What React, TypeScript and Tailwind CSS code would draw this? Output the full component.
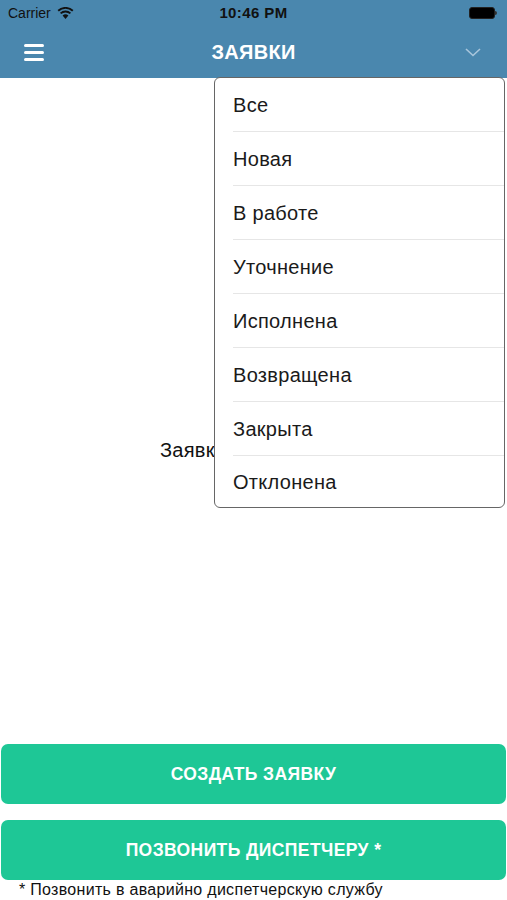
const statuses = [
  "Все",
  "Новая",
  "В работе",
  "Уточнение",
  "Исполнена",
  "Возвращена",
  "Закрыта",
  "Отклонена",
];

function Wifi() {
  return (
    <svg width="17" height="12" viewBox="0 0 17 12">
      <path d="M8.5 12 L5.6 8.6 A4.4 4.4 0 0 1 11.4 8.6 Z" fill="#111" />
      <path
        d="M3.6 6.4 A7.2 7.2 0 0 1 13.4 6.4"
        stroke="#111"
        strokeWidth="1.9"
        fill="none"
      />
      <path
        d="M1.2 3.8 A10.6 10.6 0 0 1 15.8 3.8"
        stroke="#111"
        strokeWidth="1.9"
        fill="none"
      />
    </svg>
  );
}

function Battery() {
  return (
    <div className="flex items-center">
      <div className="w-[26px] h-[12px] rounded-[3px] bg-black border border-[#222]" />
      <div className="w-[2px] h-[4px] bg-[#333] rounded-r-sm" />
    </div>
  );
}

export default function App() {
  return (
    <div
      className="relative h-[900px] w-full flex flex-col bg-white overflow-hidden"
      style={{ fontFamily: '"Liberation Sans", Arial, sans-serif' }}
    >
      {/* шапка */}
      <div className="bg-[#4a87ae] h-[78px] flex flex-col">
        <div className="h-[26px] px-2 flex items-center justify-between text-[#111] text-[14px]">
          <div className="flex items-center gap-[6px] w-[100px]">
            <span>Carrier</span>
            <Wifi />
          </div>
          <span className="font-bold text-[15px] tracking-[0.4px]">10:46 PM</span>
          <div className="w-[100px] flex justify-end pr-[2px]">
            <Battery />
          </div>
        </div>
        <div className="flex-1 flex items-center justify-between pl-[24px] pr-[24px]">
          <div className="w-[20px] flex flex-col gap-[4px]">
            <div className="h-[3px] bg-white rounded-sm" />
            <div className="h-[3px] bg-white rounded-sm" />
            <div className="h-[3px] bg-white rounded-sm" />
          </div>
          <span className="text-white font-bold text-[20px] tracking-[0.3px]">
            ЗАЯВКИ
          </span>
          <svg width="20" height="12" viewBox="0 0 20 12">
            <path
              d="M3 3 L10 9.5 L17 3"
              stroke="#a9c6dc"
              strokeWidth="1.6"
              fill="none"
            />
          </svg>
        </div>
      </div>

      {/* содержимое */}
      <div className="flex-1 flex items-center justify-center pt-[78px]">
        <span className="text-[20px] tracking-[0.3px] text-[#111]">
          Заявки отсутствуют
        </span>
      </div>

      <div className="flex flex-col gap-[16px]">
        <button className="h-[60px] mx-[1px] rounded-[7px] bg-[#1ec796] text-white font-bold text-[17.5px] tracking-[0.4px]">
          СОЗДАТЬ ЗАЯВКУ
        </button>
        <button className="h-[60px] mx-[1px] rounded-[7px] bg-[#1ec796] text-white font-bold text-[17.5px] tracking-[0.4px]">
          ПОЗВОНИТЬ ДИСПЕТЧЕРУ *
        </button>
      </div>
      <div className="h-[20px] pl-[19px] text-[16px] tracking-[0.3px] text-[#111] leading-[20px]">
        * Позвонить в аварийно диспетчерскую службу
      </div>

      {/* выпадающий список */}
      <div className="absolute left-[214px] top-[77px] w-[291px] bg-white border border-[#666] rounded-[6px]">
        {statuses.map((s, i) => (
          <div key={s} className="pl-[18px]">
            <div
              className={
                i < statuses.length - 1
                  ? "h-[54px] flex items-center border-b border-[#e6e6e6] text-[20px] tracking-[0.3px] text-[#1a1a1a]"
                  : "h-[51px] flex items-center text-[20px] tracking-[0.3px] text-[#1a1a1a]"
              }
            >
              {s}
            </div>
          </div>
        ))}
      </div>
    </div>
  );
}
